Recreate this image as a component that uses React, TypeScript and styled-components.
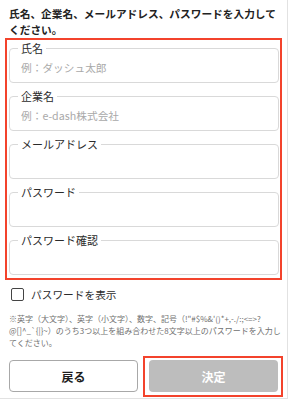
import React from 'react';
import styled, {createGlobalStyle} from 'styled-components';

const GlobalStyle = createGlobalStyle`
    html, body {
        margin: 0;
        padding: 0;
        background: #fff;
    }
    body {
        font-family: "Noto Sans CJK JP", "Noto Sans", sans-serif;
        color: #222;
    }
`

const Frame = styled.div`
    box-sizing: border-box;
    width: 288px;
    height: 399px;
    padding: 0 5px 0 5px;
    border-right: 1px solid #e2e2e2;
    border-bottom: 1px solid #e2e2e2;
    display: flex;
    flex-direction: column;
`

const Heading = styled.p`
    margin: 0;
    padding: 6px 0 0 4px;
    font-size: 10.7px;
    line-height: 16px;
    font-weight: 700;
    color: #222;
`

const Highlight = styled.div`
    border: 2px solid #f3432c;
    padding: 2px 1.5px 3px 2px;
    display: flex;
    flex-direction: column;
    gap: 7px;
`

const Field = styled.fieldset`
    margin: 0;
    padding: 0 8px 2px;
    border: 1px solid #d9d9d9;
    border-radius: 4px;
    min-width: 0;
`

const Legend = styled.legend`
    padding: 0 3px;
    font-size: 11px;
    line-height: 12px;
    color: #2b2b2b;
`

const Input = styled.input`
    display: block;
    box-sizing: border-box;
    width: 100%;
    height: 26px;
    padding: 0 3px;
    border: none;
    outline: none;
    background: transparent;
    font-family: inherit;
    font-size: 10.7px;
    color: #222;

    &::placeholder {
        color: #a9a9a9;
    }
`

const CheckRow = styled.label`
    display: flex;
    align-items: center;
    gap: 7px;
    margin-top: 6.5px;
    padding-left: 6px;
    height: 16px;
    font-size: 10.7px;
    color: #2b2b2b;
`

const Check = styled.input`
    appearance: none;
    margin: 0;
    width: 13px;
    height: 13px;
    border: 1.5px solid #444;
    border-radius: 2px;
    box-sizing: border-box;
`

const Note = styled.p`
    margin: 10.5px 0 0;
    padding-left: 4px;
    font-size: 8px;
    line-height: 12px;
    color: #707070;
`

const Buttons = styled.div`
    display: grid;
    grid-template-columns: 129px 129px;
    gap: 11px;
    margin-top: 11px;
    padding-left: 4px;
`

const Mark = styled.div`
    margin: -4px -5px -5px -6px;
    padding: 2px 3px 3px 4px;
    border: 2px solid #f3432c;
    display: flex;
`

const Button = styled.button<{primary?: boolean}>`
    flex: 1;
    height: 32px;
    box-sizing: border-box;
    border-radius: 4px;
    border: ${props => props.primary ? 'none' : '1px solid #a8a8a8'};
    background: ${props => props.primary ? '#bdbdbd' : '#fff'};
    color: ${props => props.primary ? '#fff' : '#1e1e1e'};
    font-family: inherit;
    font-size: 12px;
    font-weight: 700;
    padding: 0;
`

const fields = [
    {label: '氏名', placeholder: '例：ダッシュ太郎'},
    {label: '企業名', placeholder: '例：e-dash株式会社'},
    {label: 'メールアドレス', placeholder: ''},
    {label: 'パスワード', placeholder: ''},
    {label: 'パスワード確認', placeholder: ''},
];

const App = () => {
    return (
        <Frame>
            <GlobalStyle/>
            <Heading>氏名、企業名、メールアドレス、パスワードを入力してください。</Heading>
            <Highlight>
                {fields.map(f => (
                    <Field key={f.label}>
                        <Legend>{f.label}</Legend>
                        <Input placeholder={f.placeholder}/>
                    </Field>
                ))}
            </Highlight>
            <CheckRow>
                <Check type="checkbox"/>
                パスワードを表示
            </CheckRow>
            <Note>
                ※英字（大文字）、英字（小文字）、数字、記号（!"#$%&'()*+,-./:;&lt;=&gt;?<wbr/>@[]^_`{'{'}|{'}'}~）のうち3つ以上を組み合わせた8文字以上のパスワードを入力してください。
            </Note>
            <Buttons>
                <Button>戻る</Button>
                <Mark>
                    <Button primary>決定</Button>
                </Mark>
            </Buttons>
        </Frame>
    )
};

export default App;
